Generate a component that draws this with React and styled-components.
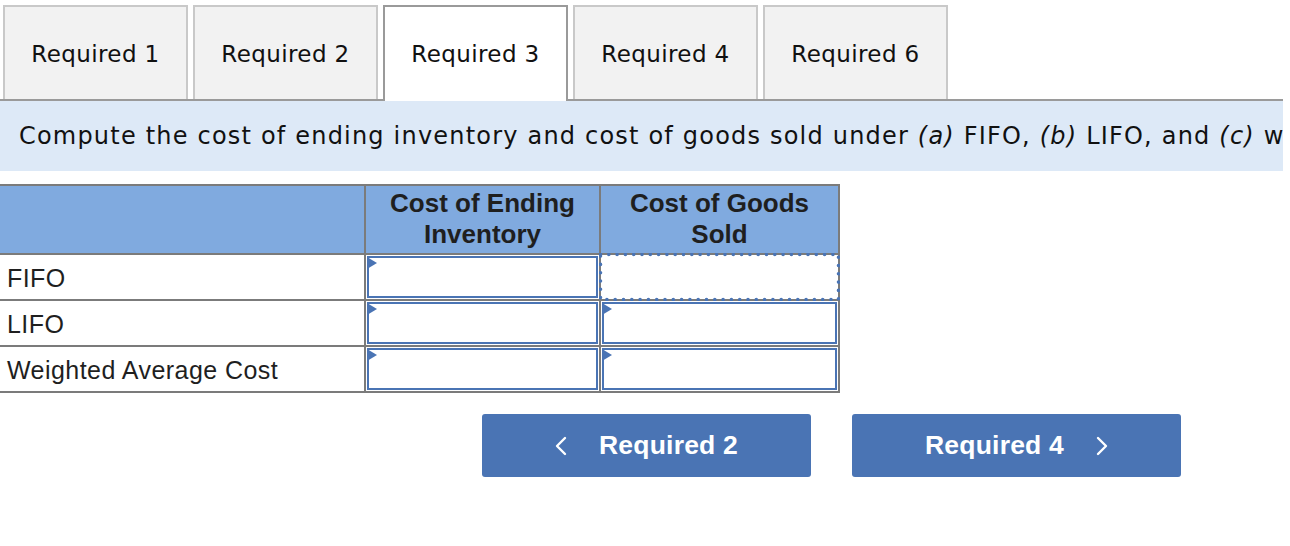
import React from "react";
import styled, { createGlobalStyle } from "styled-components";

const GlobalStyle = createGlobalStyle`
  html, body { margin: 0; padding: 0; background: #ffffff; }
  * { box-sizing: border-box; }
`;

const Page = styled.div`
  width: 1283px;
  overflow: hidden;
`;

const TabBar = styled.div`
  display: flex;
  align-items: flex-start;
  gap: 5px;
  padding: 5px 0 0 3px;
  border-bottom: 2px solid #9a9a9a;
`;

const Tab = styled.div`
  position: relative;
  width: 185px;
  height: ${(p) => (p.$active ? "96px" : "94px")};
  margin-bottom: ${(p) => (p.$active ? "-2px" : "0")};
  display: flex;
  align-items: center;
  justify-content: center;
  background: ${(p) => (p.$active ? "#ffffff" : "#f2f2f2")};
  border: 2px solid ${(p) => (p.$active ? "#9a9a9a" : "#c9c9c9")};
  border-bottom: none;
  font-family: "DejaVu Sans", Verdana, sans-serif;
  font-size: 23px;
  letter-spacing: 0.4px;
  color: #111;
  padding-top: ${(p) => (p.$active ? "0" : "2px")};
`;

const Banner = styled.div`
  height: 70px;
  display: flex;
  align-items: center;
  padding-left: 19px;
  background: #dde9f7;
  font-family: "DejaVu Sans", Verdana, sans-serif;
  font-size: 24px;
  letter-spacing: 1.2px;
  color: #111;
  white-space: nowrap;
  overflow: hidden;
  em { font-style: italic; }
`;

const Grid = styled.div`
  margin-top: 13px;
  display: grid;
  grid-template-columns: 364px 233px 237px;
  grid-auto-rows: 44px;
  grid-template-rows: 67px;
  gap: 2px;
  padding: 2px 2px 2px 0;
  width: 840px;
  background: #7b7b7b;
  font-family: "Liberation Sans", Arial, sans-serif;
`;

const HeadCell = styled.div`
  background: #80aadf;
  display: flex;
  align-items: center;
  justify-content: center;
  text-align: center;
  font-weight: bold;
  font-size: 26px;
  line-height: 31px;
  color: #1f1f1f;
  padding-bottom: 2px;
`;

const LabelCell = styled.div`
  background: #ffffff;
  display: flex;
  align-items: center;
  padding: 2px 0 0 7px;
  font-size: 25px;
  letter-spacing: 0.45px;
  color: #1f1f1f;
`;

const InputCell = styled.div`
  position: relative;
  background: #ffffff;
  padding: 1px;
`;

const InputBox = styled.div`
  width: 100%;
  height: 100%;
  border: 2px solid #4a74b4;
  background: #fff;
`;

const Flag = styled.span`
  position: absolute;
  left: 1px;
  top: 2px;
  width: 0;
  height: 0;
  border-left: 10px solid #4a74b4;
  border-top: 6.5px solid transparent;
  border-bottom: 6.5px solid transparent;
`;

const FocusOverlay = styled.svg`
  position: absolute;
  left: -2px;
  top: -2px;
  pointer-events: none;
`;

const ButtonRow = styled.div`
  display: flex;
  gap: 41px;
  padding: 21px 0 0 482px;
`;

const NavButton = styled.button`
  width: 329px;
  height: 63px;
  border: none;
  border-radius: 3px;
  background: #4a74b4;
  color: #ffffff;
  font-family: "Liberation Sans", Arial, sans-serif;
  font-weight: bold;
  font-size: 26.5px;
  letter-spacing: 0.2px;
  display: flex;
  align-items: center;
  justify-content: center;
  gap: 32px;
  padding: 0;
  cursor: pointer;
  svg { display: block; }
`;

const Chevron = ({ dir }) => (
  <svg width="12" height="20" viewBox="0 0 12 20">
    <polyline
      points={dir === "left" ? "10,2 2,10 10,18" : "2,2 10,10 2,18"}
      fill="none"
      stroke="#ffffff"
      strokeWidth="2.4"
      strokeLinecap="round"
      strokeLinejoin="round"
    />
  </svg>
);

const Entry = () => (
  <InputCell>
    <InputBox />
    <Flag />
  </InputCell>
);

const FocusedCell = () => (
  <InputCell>
    <FocusOverlay width="241" height="48">
      <rect
        x="1.5"
        y="1.5"
        width="238"
        height="45"
        fill="none"
        stroke="#4a74b4"
        strokeWidth="3.6"
        strokeDasharray="0 8.3"
        strokeLinecap="round"
      />
    </FocusOverlay>
  </InputCell>
);

const tabs = ["Required 1", "Required 2", "Required 3", "Required 4", "Required 6"];

export default function App() {
  return (
    <Page>
      <GlobalStyle />
      <TabBar>
        {tabs.map((t) => (
          <Tab key={t} $active={t === "Required 3"}>
            {t}
          </Tab>
        ))}
      </TabBar>
      <Banner>
        Compute the cost of ending inventory and cost of goods sold under&nbsp;<em>(a)</em>&nbsp;FIFO,&nbsp;<em>(b)</em>&nbsp;LIFO, and&nbsp;<em>(c)</em>&nbsp;weighted average cost.
      </Banner>
      <Grid>
        <HeadCell />
        <HeadCell>
          Cost of Ending
          <br />
          Inventory
        </HeadCell>
        <HeadCell>
          Cost of Goods
          <br />
          Sold
        </HeadCell>

        <LabelCell>FIFO</LabelCell>
        <Entry />
        <FocusedCell />

        <LabelCell>LIFO</LabelCell>
        <Entry />
        <Entry />

        <LabelCell>Weighted Average Cost</LabelCell>
        <Entry />
        <Entry />
      </Grid>
      <ButtonRow>
        <NavButton>
          <Chevron dir="left" />
          <span>Required 2</span>
        </NavButton>
        <NavButton>
          <span>Required 4</span>
          <Chevron dir="right" />
        </NavButton>
      </ButtonRow>
    </Page>
  );
}
